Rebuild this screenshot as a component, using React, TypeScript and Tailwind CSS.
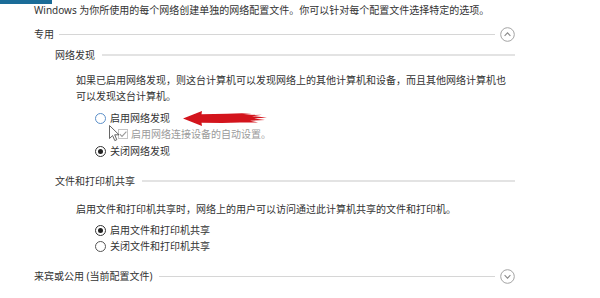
import React from "react";

const font = { fontFamily: '"Noto Sans", "Noto Sans CJK SC", sans-serif' };

function Chevron({ up }: { up: boolean }) {
  return (
    <svg width="15" height="15" viewBox="0 0 15 15" className="shrink-0">
      <circle cx="7.5" cy="7.5" r="6.8" fill="none" stroke="#a3a3a3" strokeWidth="1" />
      {up ? (
        <path d="M4.6 8.8 L7.5 5.9 L10.4 8.8" fill="none" stroke="#8a8a8a" strokeWidth="1.1" />
      ) : (
        <path d="M4.6 6.2 L7.5 9.1 L10.4 6.2" fill="none" stroke="#8a8a8a" strokeWidth="1.1" />
      )}
    </svg>
  );
}

function Radio({ checked, hover, label }: { checked?: boolean; hover?: boolean; label: string }) {
  return (
    <div className="flex h-[16px] items-center pl-[95px]">
      <div
        className={
          "flex h-[11px] w-[11px] items-center justify-center rounded-full border " +
          (checked ? "border-[#333]" : hover ? "border-[#5b8fc9]" : "border-[#555]")
        }
      >
        {checked && <div className="h-[5px] w-[5px] rounded-full bg-[#222]" />}
      </div>
      <span className="ml-[4px] text-[10px] leading-[16px] text-[#333]">{label}</span>
    </div>
  );
}

export default function App() {
  return (
    <div className="relative h-[298px] w-[600px] overflow-hidden bg-white" style={font}>
      <div className="h-[4px] w-[52px] bg-[#1b6c98]" />
      <div className="flex h-[12px] items-center pl-[34px] text-[10px] leading-[12px] text-[#333]">
        Windows 为你所使用的每个网络创建单独的网络配置文件。你可以针对每个配置文件选择特定的选项。
      </div>

      {/* 专用 */}
      <div className="mt-[10px] flex h-[16px] w-[515px] items-center pl-[34px]">
        <span className="text-[10px] text-[#333]">专用</span>
        <div className="ml-[5px] h-px flex-1 bg-[#d6d6d6]" />
        <div className="ml-[5px]">
          <Chevron up />
        </div>
      </div>

      {/* 网络发现 */}
      <div className="mt-[5px] flex h-[16px] w-[515px] items-center pl-[55px]">
        <span className="text-[10px] text-[#333]">网络发现</span>
        <div className="ml-[7px] h-[2px] flex-1 bg-[#e3e3e3]" />
      </div>

      <div className="mt-[9px] pl-[76px] text-[10px] leading-[16px] text-[#333]">
        <div>如果已启用网络发现，则这台计算机可以发现网络上的其他计算机和设备，而且其他网络计算机也</div>
        <div>可以发现这台计算机。</div>
      </div>

      <div className="mt-[6px]">
        <Radio hover label="启用网络发现" />
      </div>
      <div className="flex h-[16px] items-center pl-[118px]">
        <div className="relative h-[10px] w-[10px] border border-[#c4c4c4]">
          <svg width="10" height="10" viewBox="0 0 10 10" className="absolute left-[-1px] top-[-1px]">
            <path d="M1.8 5.2 L4 7.4 L8.4 2.6" fill="none" stroke="#9a9a9a" strokeWidth="1.1" />
          </svg>
        </div>
        <span className="ml-[3px] text-[10px] leading-[16px] text-[#9b9b9b]">启用网络连接设备的自动设置。</span>
      </div>
      <div className="mt-[1px]">
        <Radio checked label="关闭网络发现" />
      </div>

      {/* 文件和打印机共享 */}
      <div className="mt-[14px] flex h-[16px] w-[515px] items-center pl-[55px]">
        <span className="text-[10px] text-[#333]">文件和打印机共享</span>
        <div className="ml-[7px] h-[2px] flex-1 bg-[#e3e3e3]" />
      </div>

      <div className="mt-[12px] h-[16px] pl-[76px] text-[10px] leading-[16px] text-[#333]">
        启用文件和打印机共享时，网络上的用户可以访问通过此计算机共享的文件和打印机。
      </div>

      <div className="mt-[5px]">
        <Radio checked label="启用文件和打印机共享" />
        <Radio label="关闭文件和打印机共享" />
      </div>

      {/* 来宾或公用 */}
      <div className="mt-[14px] flex h-[16px] w-[515px] items-center pl-[34px]">
        <span className="text-[10px] text-[#333]">来宾或公用 (当前配置文件)</span>
        <div className="ml-[6px] h-px flex-1 bg-[#d6d6d6]" />
        <div className="ml-[5px]">
          <Chevron up={false} />
        </div>
      </div>

      {/* red annotation arrow */}
      <svg
        className="absolute left-[182px] top-[110px]"
        width="86"
        height="17"
        viewBox="0 0 86 17"
      >
        <path
          d="M1 8.5 L20 1 L19.5 4.2 L45 3.8 L60 3.2 L70 4 L62 5 L80 4.8 L70 6.2 L85 7.4 L72 8.6 L83 10 L68 10.8 L76 12.4 L58 12.6 L40 13 L19.5 12.8 L20 16 Z"
          fill="#d3141c"
        />
      </svg>

      {/* mouse cursor */}
      <svg className="absolute left-[109px] top-[125px]" width="12" height="18" viewBox="0 0 12 18">
        <path
          d="M0.5 0.5 L0.5 13.5 L3.6 10.6 L5.8 15.6 L7.8 14.7 L5.7 9.8 L10 9.8 Z"
          fill="#ffffff"
          stroke="#555"
          strokeWidth="0.9"
          strokeLinejoin="round"
        />
      </svg>
    </div>
  );
}
